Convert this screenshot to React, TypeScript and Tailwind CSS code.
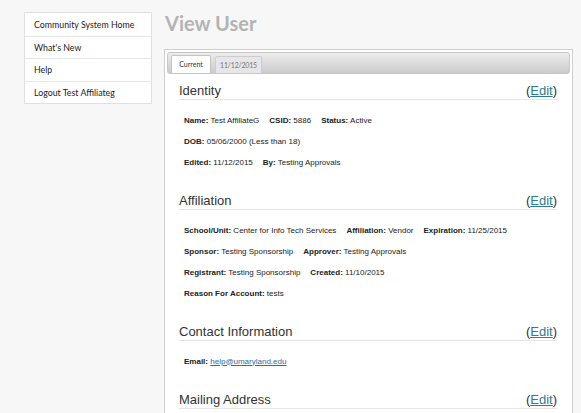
import React from 'react';

interface FieldProps {
  label: string;
  value: React.ReactNode;
}

interface SectionProps {
  title: string;
  rows: FieldProps[][];
}

const navItems = ['Community System Home', "What's New", 'Help', 'Logout Test Affiliateg'];

const Field: React.FC<FieldProps> = ({ label, value }) => (
  <span className="whitespace-nowrap">
    <span className="font-bold">{label}:</span> {value}
  </span>
);

const Section: React.FC<SectionProps> = ({ title, rows }) => (
  <section className="mb-[19px]">
    <div className="h-[18px] flex items-center justify-between border-b border-[#e6e6e6] font-['Liberation_Sans',Arial,sans-serif] text-[13px] text-[#333]">
      <span>{title}</span>
      <span>
        (<a className="text-[#2a7d93] underline">Edit</a>)
      </span>
    </div>
    <div className="pt-[10px] pl-[5px] font-['Liberation_Sans',Arial,sans-serif] text-[8px] text-[#222]">
      {rows.map((row, i) => (
        <div key={i} className="h-[21px] flex items-center gap-[10px]">
          {row.map((f, j) => (
            <Field key={j} label={f.label} value={f.value} />
          ))}
        </div>
      ))}
    </div>
  </section>
);

export default function App() {
  return (
    <div className="w-[581px] h-[413px] overflow-hidden bg-[#f7f7f7] flex">
      <nav className="ml-[24px] mt-[12px] w-[128px] self-start bg-white border border-[#e0e0e0] font-['Lato',sans-serif] text-[8.8px] text-[#222]">
        {navItems.map((item, i) => (
          <div
            key={item}
            className={`h-[22.5px] flex items-center pl-[9px] ${i > 0 ? 'border-t border-[#e6e6e6]' : ''}`}
          >
            {item}
          </div>
        ))}
      </nav>

      <main className="ml-[12px] w-[409px] flex flex-col">
        <h1 className="mt-[10px] ml-[1px] h-[26px] font-['Lato',sans-serif] font-bold text-[20px] leading-[26px] text-[#b3b3b3]">
          View User
        </h1>
        <div className="mt-[13px] flex-1 bg-white border border-[#cfcfcf] border-b-0 p-[2px] pb-0">
          <div className="h-[22px] rounded-[3px] bg-gradient-to-b from-[#ededed] to-[#cbcbcb] border border-[#c6c6c6] flex items-end pl-[3px] gap-[4px] font-['Lato',sans-serif] text-[7px]">
            <div className="h-[18px] w-[40px] justify-center flex items-center bg-white border border-b-0 border-[#c4c4c4] rounded-t-[2px] text-[#333]">
              Current
            </div>
            <div className="h-[17px] w-[47px] justify-center flex items-center bg-[#e6e6e6] border border-b-0 border-[#cdcdcd] rounded-t-[2px] text-[#777] tracking-[-0.2px]">
              11/12/2015
            </div>
          </div>
          <div className="pt-[8px] pl-[12px] pr-[13px]">
            <Section
              title="Identity"
              rows={[
                [
                  { label: 'Name', value: 'Test AffiliateG' },
                  { label: 'CSID', value: '5886' },
                  { label: 'Status', value: 'Active' },
                ],
                [{ label: 'DOB', value: '05/06/2000 (Less than 18)' }],
                [
                  { label: 'Edited', value: '11/12/2015' },
                  { label: 'By', value: 'Testing Approvals' },
                ],
              ]}
            />
            <Section
              title="Affiliation"
              rows={[
                [
                  { label: 'School/Unit', value: 'Center for Info Tech Services' },
                  { label: 'Affiliation', value: 'Vendor' },
                  { label: 'Expiration', value: '11/25/2015' },
                ],
                [
                  { label: 'Sponsor', value: 'Testing Sponsorship' },
                  { label: 'Approver', value: 'Testing Approvals' },
                ],
                [
                  { label: 'Registrant', value: 'Testing Sponsorship' },
                  { label: 'Created', value: '11/10/2015' },
                ],
                [{ label: 'Reason For Account', value: 'tests' }],
              ]}
            />
            <Section
              title="Contact Information"
              rows={[
                [
                  {
                    label: 'Email',
                    value: <a className="text-[#2a6f9e] underline">help@umaryland.edu</a>,
                  },
                ],
              ]}
            />
            <Section title="Mailing Address" rows={[]} />
          </div>
        </div>
      </main>
    </div>
  );
}
